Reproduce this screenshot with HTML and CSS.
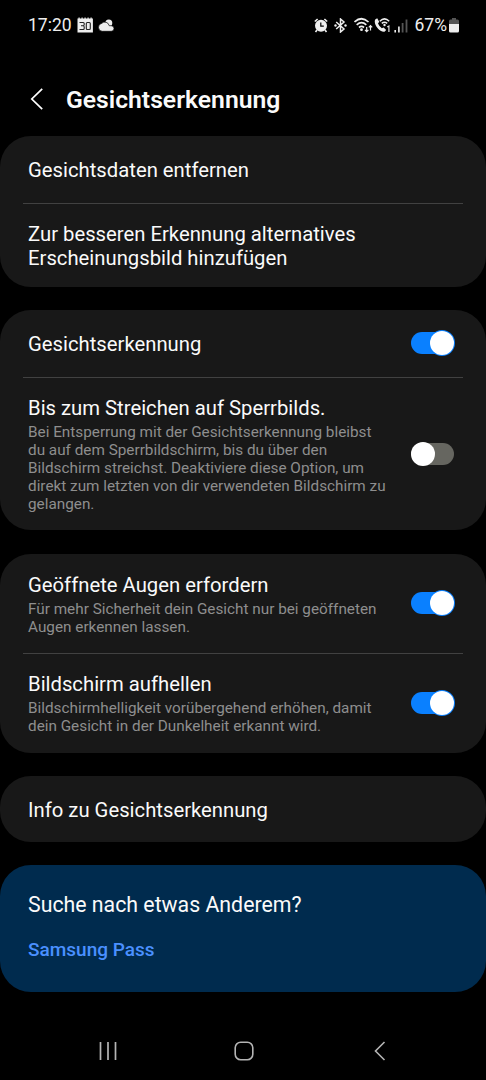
FILE: index.html
```html
<!DOCTYPE html>
<html lang="de">
<head>
	<meta charset="UTF-8">
	<meta name="viewport" content="width=device-width, initial-scale=1.0">
	<title>Gesichtserkennung</title>
	<link rel="stylesheet" href="styles.css">
</head>
<body>
	<div class="status-bar">
		<span class="time">17:20</span>
		<svg class="calendar" width="16" height="16" viewBox="0 0 16 16">
			<path d="M.5 1.500h1V.5h1.200v1h1.800v-1h1.200v1h1.800v-1h1.200v1h1.800v-1h1.200v1h1.800v-1h1.200v1h1.200V15.500H.5z" fill="#eee"/>
			<path d="M2.500 5.500h3.700q1 0 1 1v1q0 1.200-1 1.200H4M6.200 8.700q1 0 1 1.200v1.600q0 1-1 1H2.500" fill="none" stroke="#222" stroke-width="1.100"/>
			<rect x="9.300" y="5.500" width="4" height="7" rx="1" fill="none" stroke="#222" stroke-width="1.100"/>
		</svg>
		<svg class="cloud" width="16" height="13" viewBox="0 0 16 13">
			<circle cx="10.800" cy="4" r="3.500" fill="#eee"/>
			<path d="M4.200 12.300a4 4 0 0 1-.6-7.900 4.500 4.500 0 0 1 7.600 2.300h2a2.800 2.800 0 0 1 0 5.600z" fill="#eee" stroke="#000" stroke-width=".7"/>
		</svg>
		<div class="status-icons">
			<svg width="14" height="15" viewBox="0 0 14 15">
				<path d="M.8 3.500 3.600 1M13.200 3.500 10.400 1M3 12l-1.500 2M11 12l1.500 2" stroke="#eee" stroke-width="1.600"/>
				<circle cx="7" cy="7.700" r="6" fill="#eee"/>
				<path d="M6.800 4.500v3.700h3" fill="none" stroke="#000" stroke-width="1.200"/>
			</svg>
			<svg class="bluetooth" width="13" height="15" viewBox="0 0 13 15">
				<path d="m2.200 4 7.800 7-3.500 3V1L10 4l-7.800 7" fill="none" stroke="#eee" stroke-width="1.500"/>
				<circle cx="1.500" cy="7.500" r="1.200" fill="#eee"/>
				<circle cx="11.500" cy="7.500" r="1.200" fill="#eee"/>
			</svg>
			<svg class="wifi" width="19" height="16" viewBox="0 0 19 16">
				<path d="M.5 5Q7.500 -1.500 14.500 5M2.700 7.800Q7.500 3.600 12.300 7.800M5 10.500Q7.500 8.400 10 10.500" fill="none" stroke="#eee" stroke-width="1.700"/>
				<circle cx="7.500" cy="12.700" r="1.400" fill="#eee"/>
				<path d="M12.700 10v4.500M11 12.800l1.700 1.800 1.700-1.800M16.500 13.500V8.500M14.800 10.300l1.700-1.800 1.700 1.800" fill="none" stroke="#eee" stroke-width="1.200"/>
			</svg>
			<svg class="call" width="17" height="16" viewBox="0 0 17 16">
				<path d="M1.200 2.500 3.200 1.200l2 3.600L4 6.400q1.300 3 3.800 4.900l1.800-.9 2.600 2.600-1.700 1.700C5.500 15.500-1 7 1.200 2.500z" fill="#eee"/>
				<path d="M5.800 4.200q4.700-4.600 9.400 0M7.800 6.400q2.700-2.400 5.400 0" fill="none" stroke="#eee" stroke-width="1.500"/>
				<circle cx="10.500" cy="8" r="1.200" fill="#eee"/>
				<path d="m13.200 10 1.700-1v6" fill="none" stroke="#ddd" stroke-width="1.200"/>
			</svg>
			<svg class="signal" width="14" height="15" viewBox="0 0 14 15">
				<path d="M1.200 12v2.500M4.900 8.500v6" stroke="#eee" stroke-width="1.600"/>
				<path d="M8.600 5v9.500M12.500 1.500v13" stroke="#555" stroke-width="1.800"/>
			</svg>
			<span class="percent">67%</span>
			<svg class="battery" width="10" height="15" viewBox="0 0 10 15">
				<path d="M3 0h4v1.500h1.500Q10 1.500 10 3v3H0V3q0-1.500 1.500-1.500H3z" fill="#555"/>
				<path d="M0 6h10v7q0 1.500-1.500 1.500h-7Q0 14.500 0 13z" fill="#eee"/>
			</svg>
		</div>
	</div>

	<div class="header">
		<svg width="14" height="24" viewBox="0 0 14 24">
			<path d="M12.200 1.800 1.800 12l10.400 10.200" fill="none" stroke="#fff" stroke-width="1.700"/>
		</svg>
		<h1>Gesichtserkennung</h1>
	</div>

	<div class="card">
		<div class="row">
			<div class="title">Gesichtsdaten entfernen</div>
		</div>
		<div class="row two-line">
			<div class="title">Zur besseren Erkennung alternatives<br>Erscheinungsbild hinzufügen</div>
		</div>
	</div>

	<div class="card">
		<div class="row">
			<div class="title">Gesichtserkennung</div>
			<div class="switch on"></div>
		</div>
		<div class="row detail long">
			<div>
				<div class="title">Bis zum Streichen auf Sperrbilds.</div>
				<div class="desc">Bei Entsperrung mit der Gesichtserkennung bleibst<br>du auf dem Sperrbildschirm, bis du über den<br>Bildschirm streichst. Deaktiviere diese Option, um<br>direkt zum letzten von dir verwendeten Bildschirm zu<br>gelangen.</div>
			</div>
			<div class="switch"></div>
		</div>
	</div>

	<div class="card">
		<div class="row detail">
			<div>
				<div class="title">Geöffnete Augen erfordern</div>
				<div class="desc">Für mehr Sicherheit dein Gesicht nur bei geöffneten<br>Augen erkennen lassen.</div>
			</div>
			<div class="switch on"></div>
		</div>
		<div class="row detail">
			<div>
				<div class="title">Bildschirm aufhellen</div>
				<div class="desc">Bildschirmhelligkeit vorübergehend erhöhen, damit<br>dein Gesicht in der Dunkelheit erkannt wird.</div>
			</div>
			<div class="switch on"></div>
		</div>
	</div>

	<div class="card">
		<div class="row info">
			<div class="title">Info zu Gesichtserkennung</div>
		</div>
	</div>

	<div class="card search">
		<div class="question">Suche nach etwas Anderem?</div>
		<div class="link">Samsung Pass</div>
	</div>

	<div class="nav-bar">
		<svg width="20" height="20" viewBox="0 0 20 20">
			<path d="M2.500 1v18M10 1v18M17.500 1v18" stroke="#b4b4b4" stroke-width="1.700"/>
		</svg>
		<svg width="20" height="20" viewBox="0 0 20 20">
			<rect x="1.200" y="1.200" width="17.600" height="17.600" rx="5.500" fill="none" stroke="#b4b4b4" stroke-width="1.600"/>
		</svg>
		<svg width="12" height="20" viewBox="0 0 12 20">
			<path d="M10.500 1 1.500 10l9 9" fill="none" stroke="#b4b4b4" stroke-width="1.600"/>
		</svg>
	</div>
</body>
</html>
```

FILE: styles.css
```css
* {
	box-sizing: border-box;
}
body {
	margin: 0;
	height: 1080px;
	background: #000;
	color: #fafafa;
	font-family: Roboto, sans-serif;
	overflow: hidden;
}
svg {
	display: block;
	flex-shrink: 0;
}
.status-bar {
	display: flex;
	align-items: center;
	height: 50px;
	padding: 0 27px 0 28px;
	font-size: 17.5px;
	color: #eee;
}
.calendar {
	margin-left: 5px;
}
.cloud {
	margin-left: 5px;
}
.status-icons {
	display: flex;
	align-items: center;
	margin-left: auto;
}
.bluetooth {
	margin-left: 6px;
}
.wifi {
	margin-left: 7px;
}
.call {
	margin-left: 1px;
}
.signal {
	margin-left: 3px;
}
.percent {
	margin: 0 2px 0 7px;
}
.header {
	display: flex;
	align-items: center;
	height: 86px;
	padding: 12px 0 0 30px;
}
h1 {
	margin: 1px 0 0 22px;
	font-size: 24.7px;
	font-weight: 600;
	line-height: 30px;
}
.card {
	margin-bottom: 23.4px;
	border-radius: 31px;
	background: #181818;
}
.row {
	position: relative;
	display: flex;
	align-items: center;
	justify-content: space-between;
	height: 67px;
	padding: 1px 32px 0 28px;
}
/* divider does not reach the card edges */
.row + .row::before {
	content: "";
	position: absolute;
	top: 0;
	left: 23px;
	right: 23px;
	height: 1px;
	background: #414141;
}
.two-line {
	height: 84px;
}
.detail {
	height: auto;
	padding-top: 19px;
	padding-bottom: 17.5px;
}
.long {
	padding-bottom: 16.9px;
}
.info {
	height: 65.5px;
	padding-top: 2px;
}
.title {
	font-size: 20.28px;
	line-height: 24px;
	white-space: nowrap;
}
.desc {
	margin-top: 3px;
	font-size: 15.3px;
	line-height: 18px;
	color: #8e8e8e;
	white-space: nowrap;
}
.switch {
	display: flex;
	align-items: center;
	width: 43px;
	height: 22px;
	margin-bottom: 2px;
	border-radius: 11px;
	background: #666660;
}
.switch::before {
	content: "";
	flex-shrink: 0;
	width: 24px;
	height: 24px;
	border-radius: 50%;
	background: #fff;
}
.switch.on {
	justify-content: flex-end;
	background: #0a80ff;
}
.switch.on::before {
	box-shadow: 0 0 0 1px #0a80ff;
}
.search {
	height: 127px;
	margin-bottom: 0;
	padding: 27px 28px 0;
	background: #002b4e;
}
.question {
	font-size: 21.3px;
	line-height: 26px;
}
.link {
	margin-top: 20px;
	font-size: 19px;
	font-weight: 500;
	line-height: 24px;
	color: #4a90ff;
}
.nav-bar {
	display: grid;
	grid-template-columns: 136px 140px 12px;
	margin-top: 49px;
	padding-left: 98px;
}
```
